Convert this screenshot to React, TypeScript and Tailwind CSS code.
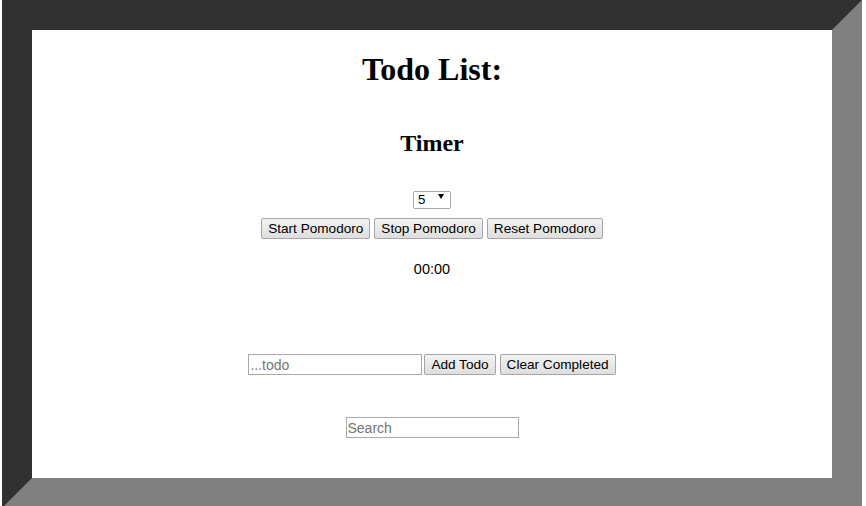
import { useState } from 'react'

const btn =
  'h-[21px] rounded-[2px] border border-[#a6a6a6] bg-gradient-to-b from-[#f3f3f3] to-[#dedede] px-[6px] text-[13.6px] leading-[19px] text-black'

function PomodoroButton({ label }: { label: string }): React.ReactElement {
  return (
    <button type="button" className={btn}>
      {label}
    </button>
  )
}

export default function App(): React.ReactElement {
  const [minutes, setMinutes] = useState('5')
  const [todo, setTodo] = useState('')
  const [search, setSearch] = useState('')

  return (
    <div className="h-[506px] overflow-hidden bg-white pl-[2px] font-['Liberation_Sans',Arial,sans-serif] text-black">
      <div className="w-[860px] border-[30px] border-t-[#313131] border-l-[#313131] border-r-[#808080] border-b-[#808080] bg-white">
        <div className="flex h-[448px] flex-col items-center">
          <h1 className="mt-[21px] font-['Liberation_Serif','Times_New_Roman',serif] text-[32px] font-bold leading-[37px]">
            Todo List:
          </h1>
          <h2 className="mt-[41px] font-['Liberation_Serif','Times_New_Roman',serif] text-[24px] font-bold leading-[28px]">
            Timer
          </h2>

          <div className="relative mt-[30px] h-[18px] w-[38px]">
            <select
              value={minutes}
              onChange={(e) => setMinutes(e.target.value)}
              className="h-full w-full appearance-none rounded-[2px] border border-[#a9a9a9] bg-white pl-[4px] text-[13.33px] leading-[16px] outline-none"
            >
              <option value="5">5</option>
              <option value="10">10</option>
              <option value="15">15</option>
              <option value="25">25</option>
            </select>
            <span className="pointer-events-none absolute right-[7px] top-[7px] h-0 w-0 border-x-[3.5px] border-t-[5px] border-x-transparent border-t-black" />
          </div>

          <div className="mt-[13px] flex gap-[4px]">
            <PomodoroButton label="Start Pomodoro" />
            <PomodoroButton label="Stop Pomodoro" />
            <PomodoroButton label="Reset Pomodoro" />
          </div>

          <p className="mt-[21px] text-[14.5px] leading-[18px]">00:00</p>

          <div className="mt-[76px] flex items-center">
            <input
              value={todo}
              onChange={(e) => setTodo(e.target.value)}
              placeholder="...todo"
              className="h-[21px] w-[174px] border border-[#a9a9a9] px-[1px] text-[14px] leading-[19px] outline-none placeholder:text-[#757575]"
            />
            <button type="button" className={`${btn} ml-[2px]`}>
              Add Todo
            </button>
            <button type="button" className={`${btn} ml-[4px]`}>
              Clear Completed
            </button>
          </div>

          <input
            value={search}
            onChange={(e) => setSearch(e.target.value)}
            placeholder="Search"
            className="mt-[42px] h-[21px] w-[173px] border border-[#a9a9a9] px-[1px] text-[14px] leading-[19px] outline-none placeholder:text-[#757575]"
          />
        </div>
      </div>
    </div>
  )
}
